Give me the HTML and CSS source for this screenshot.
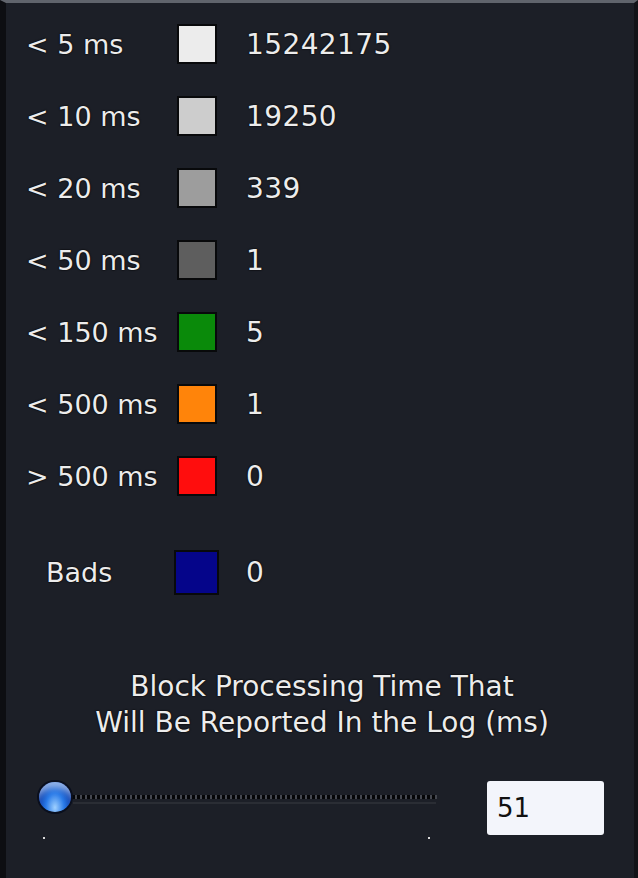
FILE: index.html
```html
<!DOCTYPE html>
<html>
<head>
<meta charset="utf-8">
<link rel="stylesheet" href="styles.css">
</head>
<body>
<div class="panel">
  <div class="legend">
    <div class="row"><span class="label">&lt; 5 ms</span><span class="sw c5"></span><span class="num">15242175</span></div>
    <div class="row"><span class="label">&lt; 10 ms</span><span class="sw c10"></span><span class="num">19250</span></div>
    <div class="row"><span class="label">&lt; 20 ms</span><span class="sw c20"></span><span class="num">339</span></div>
    <div class="row"><span class="label">&lt; 50 ms</span><span class="sw c50"></span><span class="num">1</span></div>
    <div class="row"><span class="label">&lt; 150 ms</span><span class="sw c150"></span><span class="num">5</span></div>
    <div class="row"><span class="label">&lt; 500 ms</span><span class="sw c500"></span><span class="num">1</span></div>
    <div class="row"><span class="label">&gt; 500 ms</span><span class="sw cbig"></span><span class="num">0</span></div>
    <div class="row bads"><span class="label">Bads</span><span class="sw cbad"></span><span class="num">0</span></div>
  </div>
  <div class="title">Block Processing Time That<br>Will Be Reported In the Log (ms)</div>
  <div class="sliderrow">
    <div class="slider">
      <div class="track"></div>
      <div class="thumb"></div>
      <div class="ticks"><span class="tick"></span><span class="tick"></span></div>
    </div>
    <div class="input">51</div>
  </div>
</div>
</body>
</html>
```
FILE: styles.css
```css
html, body {
  margin: 0;
  padding: 0;
  background: #1c1f27;
}
body {
  width: 638px;
  height: 878px;
  overflow: hidden;
}
.panel {
  box-sizing: border-box;
  width: 638px;
  height: 878px;
  background: #1c1f27;
  border-left: 6px solid #0d0e12;
  border-right: 4px solid #121318;
  border-top: 3px solid #60646c;
  display: flex;
  flex-direction: column;
  font-family: "DejaVu Sans", sans-serif;
  color: #ececec;
  text-shadow: 0 0 2px #000, 0 0 1px #000;
}
.legend {
  display: flex;
  flex-direction: column;
  padding-top: 5px;
  padding-left: 20px;
}
.row {
  display: grid;
  grid-template-columns: 151px 40px auto;
  align-items: center;
  height: 72px;
  font-size: 27px;
}
.num {
  margin-left: 29px;
  font-size: 28px;
  letter-spacing: 0.4px;
}
.label {
  white-space: nowrap;
}
.sw {
  width: 40px;
  height: 40px;
  box-sizing: border-box;
  border: 2px solid #08090b;
}
.c5 { background: #ececec; }
.c10 { background: #cdcdcd; }
.c20 { background: #9d9d9d; }
.c50 { background: #5e5e5e; }
.c150 { background: #0a8a0a; }
.c500 { background: #ff840a; }
.cbig { background: #ff0d0d; }
.cbad { background: #05058a; width: 45px; height: 45px; margin-left: -3px; }
.bads {
  margin-top: 24px;
}
.bads .num {
  margin-left: 29px;
}
.bads .label {
  padding-left: 20px;
}
.title {
  margin-top: 61px;
  text-align: center;
  font-size: 28px;
  line-height: 36px;
  padding-left: 4px;
}
.sliderrow {
  display: flex;
  align-items: flex-start;
  margin-top: 36px;
  padding-left: 30px;
}
.slider {
  position: relative;
  width: 404px;
  height: 66px;
}
.track {
  position: absolute;
  left: 36px;
  right: 3px;
  top: 18px;
  height: 4px;
  background: repeating-linear-gradient(90deg, #050608 0 3px, #44474f 3px 5px);
  box-shadow: 0 6px 0 -1px #2a2d34;
}
.thumb {
  position: absolute;
  left: 3px;
  top: 5px;
  width: 32px;
  height: 30px;
  border-radius: 50%;
  background: radial-gradient(ellipse at 50% 85%, #9fd0ff 0%, #2a7be8 40%, #0b3aa8 75%, #061a5a 100%);
  box-shadow: 0 0 0 2px #0a0f1e, inset 0 10px 6px -4px rgba(200,225,255,0.7);
}
.ticks {
  position: absolute;
  left: 7px;
  right: 10px;
  top: 60px;
  display: flex;
  justify-content: space-between;
}
.tick {
  width: 2px;
  height: 2px;
  background: #d8d8d8;
}
.input {
  margin-left: 47px;
  margin-top: 4px;
  box-sizing: border-box;
  width: 117px;
  height: 54px;
  background: #f3f5fb;
  border-radius: 3px;
  color: #111;
  text-shadow: none;
  font-size: 26px;
  line-height: 54px;
  padding-left: 10px;
}
```
